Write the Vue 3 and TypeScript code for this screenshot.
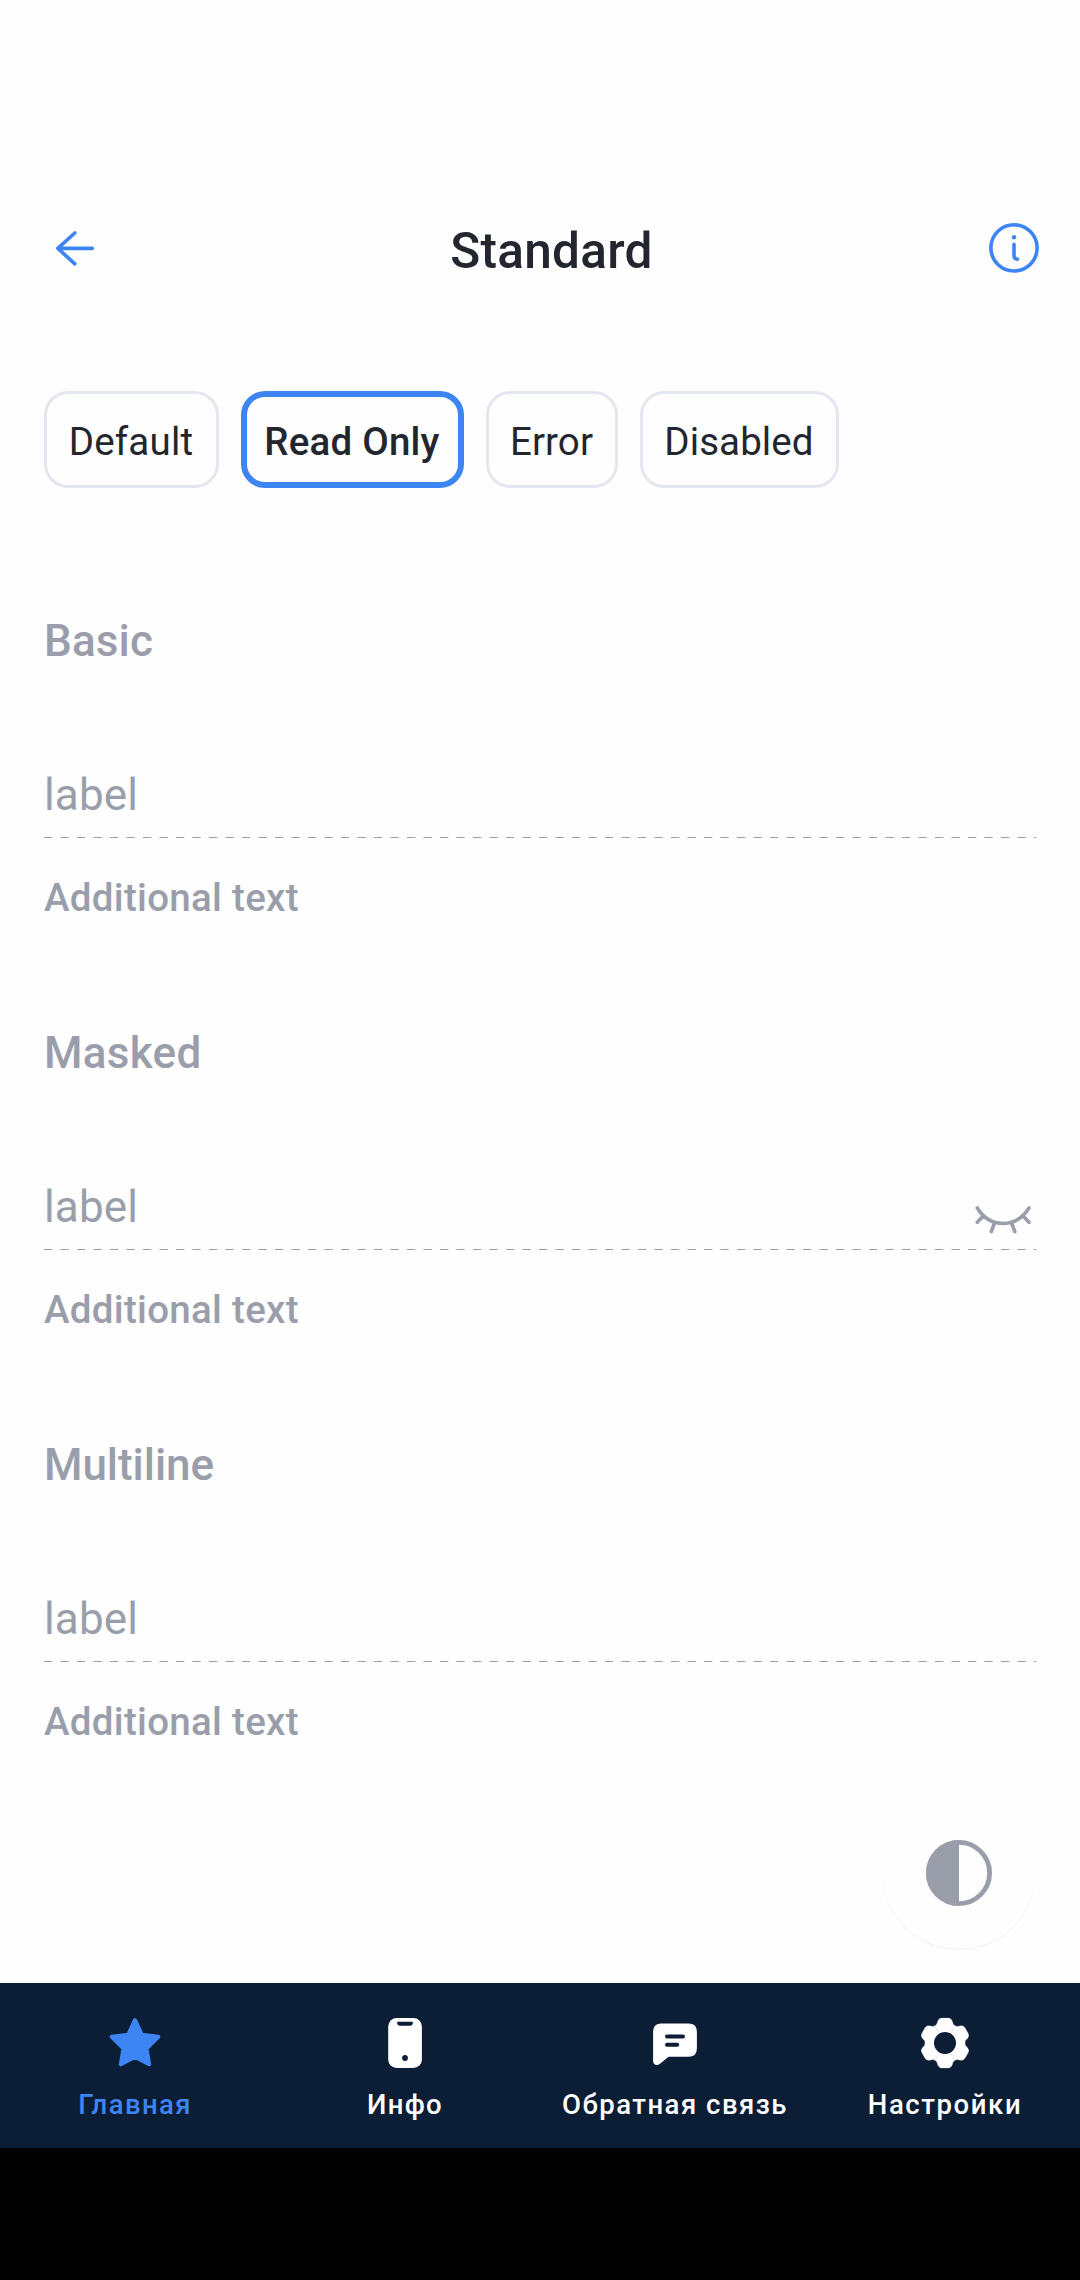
<script setup lang="ts">
import { ref } from 'vue'

interface Chip { title: string; width: number; spacing: number }
interface Field { title: string; spacing: number; masked?: boolean }
interface Tab { title: string; icon: 'star' | 'phone' | 'chat' | 'gear'; spacing: number }

const chips: Chip[] = [
  { title: 'Default', width: 175, spacing: 0.2 },
  { title: 'Read Only', width: 223, spacing: 0.2 },
  { title: 'Error', width: 132, spacing: 0.1 },
  { title: 'Disabled', width: 199, spacing: 0.1 },
]
const selected = ref('Read Only')

const fields: Field[] = [
  { title: 'Basic', spacing: 0.15 },
  { title: 'Masked', spacing: 0.3, masked: true },
  { title: 'Multiline', spacing: -0.05 },
]

const tabs: Tab[] = [
  { title: 'Главная', icon: 'star', spacing: 1.38 },
  { title: 'Инфо', icon: 'phone', spacing: 1.25 },
  { title: 'Обратная связь', icon: 'chat', spacing: 1.5 },
  { title: 'Настройки', icon: 'gear', spacing: 1.6 },
]
const active = ref('Главная')

const toothAngles = [0, 60, 120, 180, 240, 300]
</script>

<template>
  <div class="screen">
    <header class="header">
      <button class="icon-btn back" aria-label="Back">
        <svg width="66" height="66" viewBox="0 0 66 66" fill="none" stroke="currentColor" stroke-width="3.6" stroke-linecap="round" stroke-linejoin="round">
          <path d="M30.8 18 L13.8 33.4 L30.8 48.8 M14.5 33.4 H48.3" />
        </svg>
      </button>
      <h1 class="title">Standard</h1>
      <button class="icon-btn info" aria-label="Info">
        <svg width="66" height="66" viewBox="0 0 66 66" fill="none" stroke="currentColor" stroke-width="3.6" stroke-linecap="round">
          <circle cx="33" cy="32.9" r="23.1" />
          <path d="M33 29.2 V40.6 Q33 44.2 36.5 44.2" />
          <circle cx="33" cy="22.2" r="2.2" fill="currentColor" stroke="none" />
        </svg>
      </button>
    </header>

    <nav class="chips">
      <button
        v-for="chip in chips"
        :key="chip.title"
        class="chip"
        :class="{ selected: chip.title === selected }"
        :style="{ width: chip.width + 'px', letterSpacing: chip.spacing + 'px' }"
        @click="selected = chip.title"
      >{{ chip.title }}</button>
    </nav>

    <main class="fields">
      <section v-for="field in fields" :key="field.title" class="field">
        <h2 class="heading" :style="{ letterSpacing: field.spacing + 'px' }">{{ field.title }}</h2>
        <div class="input">
          <span class="label">label</span>
          <svg v-if="field.masked" class="eye" width="66" height="66" viewBox="0 0 66 66" fill="none" stroke="currentColor" stroke-width="3.6" stroke-linecap="round">
            <path d="M7.3 25 C20 45.6 46 45.6 59 25 M13.6 32.6 L7.3 39.2 M24.3 40.5 L21.3 48.6 M41.8 40.5 L44.8 48.6 M52.6 32.6 L59 39.2" />
          </svg>
        </div>
        <svg class="line" width="992" height="1" viewBox="0 0 992 1">
          <path d="M0 0.5 H992" stroke="currentColor" stroke-width="1" stroke-dasharray="8.25 8.25" />
        </svg>
        <p class="helper">Additional text</p>
      </section>
    </main>

    <footer class="tabs">
      <button
        v-for="tab in tabs"
        :key="tab.title"
        class="tab"
        :class="{ active: tab.title === active }"
        @click="active = tab.title"
      >
        <svg width="66" height="66" viewBox="0 0 66 66">
          <path
            v-if="tab.icon === 'star'"
            d="M33 10.2 L39.8 24.7 L56.3 26.8 L44.5 38.6 L47.2 54.3 L33 46.9 L18.8 54.3 L21.5 38.6 L9.7 26.8 L26.2 24.7 Z"
            fill="currentColor" stroke="currentColor" stroke-width="4" stroke-linejoin="round"
          />
          <g v-else-if="tab.icon === 'phone'">
            <rect x="16.2" y="8.1" width="33.7" height="49.8" rx="8.5" fill="currentColor" />
            <path d="M25.2 11.7 H40.8 V12.8 Q40.8 15.7 37.9 15.7 H28.1 Q25.2 15.7 25.2 12.8 Z" class="cut" />
            <circle cx="33" cy="48" r="2.9" class="cut" />
          </g>
          <g v-else-if="tab.icon === 'chat'">
            <path d="M19.4 13.4 H46.6 Q54.9 13.4 54.9 21.7 V38.3 Q54.9 46.8 46.6 46.8 H26.6 L17.7 54 C15 56.2 11.1 54.7 11.1 51.2 V21.7 Q11.1 13.4 19.4 13.4 Z" fill="currentColor" />
            <path d="M25 26.6 H41 M25 34.8 H35.2" class="cut-line" />
          </g>
          <g v-else>
            <path
              v-for="angle in toothAngles"
              :key="angle"
              :transform="`rotate(${angle} 33 33)`"
              d="M33 33 L23 15.7 Q24.9 14.8 25.3 12.8 Q26.2 8.1 30 8.1 H36 Q39.8 8.1 40.7 12.8 Q41.1 14.8 43 15.7 Z"
              fill="currentColor" stroke="currentColor" stroke-width="0.3"
            />
            <circle cx="33" cy="33" r="11" class="cut" />
          </g>
        </svg>
        <span class="tab-title" :style="{ letterSpacing: tab.spacing + 'px' }">{{ tab.title }}</span>
      </button>
    </footer>
    <div class="system-bar"></div>

    <button class="fab" aria-label="Theme">
      <svg width="66" height="66" viewBox="0 0 66 66">
        <circle cx="33" cy="33" r="30.6" fill="none" stroke="currentColor" stroke-width="4.8" />
        <path d="M33 0 A33 33 0 0 0 33 66 Z" fill="currentColor" />
      </svg>
    </button>
  </div>
</template>

<style>
body { margin: 0; background: #fefefe; }
</style>

<style scoped>
.screen {
  position: relative;
  display: flex;
  flex-direction: column;
  width: 1080px;
  height: 2280px;
  overflow: hidden;
  background: #fefefe;
  font-family: Roboto, "Noto Sans", sans-serif;
  color: #23262f;
}
button {
  margin: 0;
  padding: 0;
  border: 0;
  background: none;
  font-family: inherit;
  color: inherit;
}
svg { display: block; flex: none; }

.header {
  display: flex;
  align-items: center;
  height: 66px;
  margin-top: 215px;
  padding: 0 44px;
}
.icon-btn {
  display: flex;
  justify-content: center;
  color: #3d85f2;
}
.back { width: 66px; }
.info { width: 44px; }
.title {
  flex: 1;
  margin: 0;
  padding: 5px 0 0 1px;
  text-align: center;
  font-size: 49.5px;
  line-height: 60px;
  font-weight: 500;
  letter-spacing: 0.27px;
}

.chips {
  display: flex;
  gap: 22px;
  margin-top: 110px;
  padding: 0 44px;
}
.chip {
  box-sizing: border-box;
  height: 97px;
  padding: 4px 1px 0 0;
  border: 3px solid #e4e7ef;
  border-radius: 24px;
  font-size: 38.5px;
  line-height: 46px;
  font-weight: 400;
  white-space: nowrap;
}
.chip.selected {
  border: 6px solid #3d85f2;
  font-weight: 500;
}

.fields {
  flex: 1;
  padding: 127px 44px 0;
  color: #9a9eaa;
}
.field { height: 412px; }
.heading {
  margin: 0;
  font-size: 44px;
  line-height: 52px;
  font-weight: 500;
}
.input {
  display: flex;
  justify-content: space-between;
  height: 68px;
  margin-top: 102px;
}
.label {
  font-size: 44px;
  line-height: 52px;
  letter-spacing: 0.15px;
}
.eye { margin-top: 2px; }
.helper {
  margin: 34px 0 0;
  font-size: 38.5px;
  line-height: 52px;
  font-weight: 500;
  letter-spacing: 0.3px;
}

.tabs {
  display: grid;
  grid-template-columns: repeat(4, 1fr);
  height: 165px;
  background: #0c1d36;
  color: #fff;
}
.tab {
  display: flex;
  flex-direction: column;
  align-items: center;
  padding-top: 27px;
}
.tab.active { color: #3d85f2; }
.tab-title {
  margin-top: 13px;
  font-size: 27.5px;
  line-height: 32px;
  font-weight: 500;
  white-space: nowrap;
}
.cut { fill: #0c1d36; }
.cut-line {
  fill: none;
  stroke: #0c1d36;
  stroke-width: 4;
  stroke-linecap: round;
}
.system-bar {
  height: 132px;
  background: #000;
}

.fab {
  position: absolute;
  left: 882px;
  top: 1796px;
  display: flex;
  align-items: center;
  justify-content: center;
  width: 154px;
  height: 154px;
  border-radius: 50%;
  background: linear-gradient(#fefefe, #fefefe) padding-box, linear-gradient(#fefefe 50%, #f1f1f1) border-box;
  border: 1px solid transparent;
  box-sizing: border-box;
  color: #9a9eaa;
}
</style>
